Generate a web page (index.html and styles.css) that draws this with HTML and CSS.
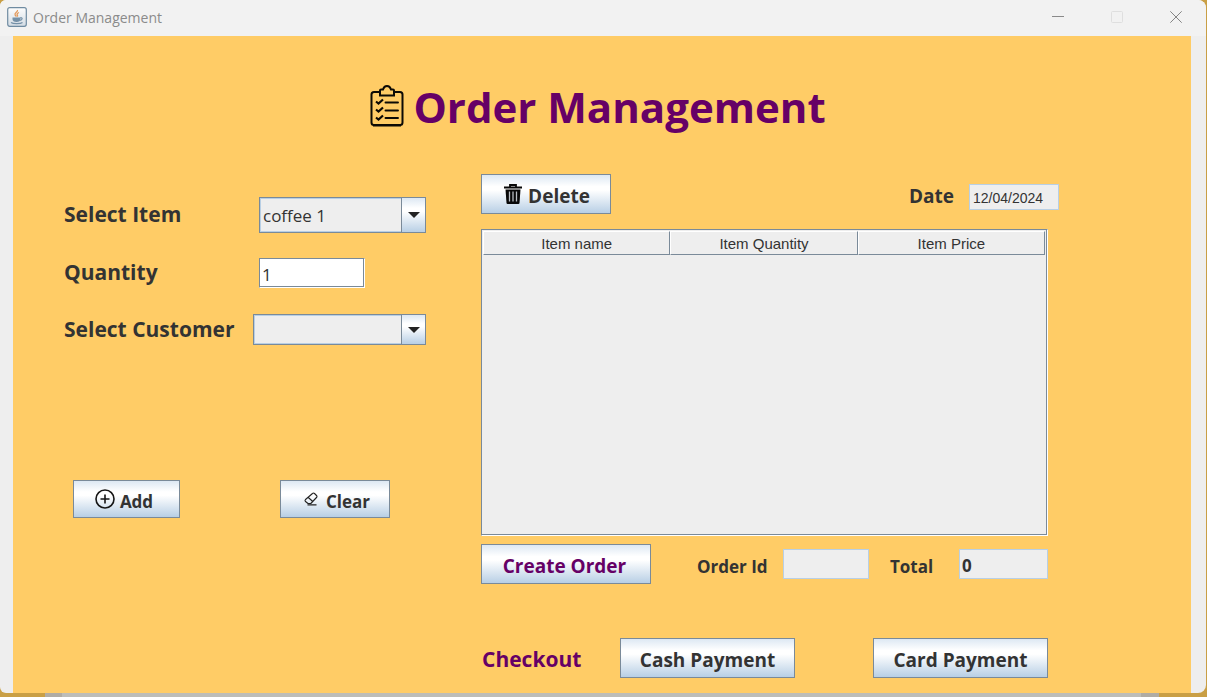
FILE: index.html
```html
<!DOCTYPE html>
<html lang="en">
<head>
<meta charset="utf-8">
<title>Order Management</title>
<link rel="stylesheet" href="styles.css">
</head>
<body>
<div class="window">
  <header class="titlebar">
    <svg class="app-icon" viewBox="0 0 20 20" aria-hidden="true">
      <defs><linearGradient id="tile" x1="0" y1="0" x2="0" y2="1"><stop offset="0" stop-color="#fdfdfd"/><stop offset="1" stop-color="#d3dce4"/></linearGradient></defs>
      <rect x=".7" y=".7" width="18.6" height="18.6" rx="2" fill="url(#tile)" stroke="#6f8ba1" stroke-width="1.2"/>
      <path d="M10.5 3c.6 2-3.400 2.600-2.400 5 .3.8 1 1.200 1.400 1.500M12 5.500c-1.800.9-2.400 1.600-1.600 2.600.4.5.2 1-.3 1.400" fill="none" stroke="#e39a5c" stroke-width="1.300"/>
      <path d="M5.500 10.500h8v1.500c0 1.800-1.500 3-4 3s-4-1.200-4-3z" fill="#7591a8"/>
      <path d="M13.300 10.800c2.600-.6 2.400 2.200-.5 2.600M4 15.500c2 1.500 9.500 1.500 11.500 0" fill="none" stroke="#7591a8" stroke-width="1.200"/>
    </svg>
    <span class="titlebar-text">Order Management</span>
    <div class="window-buttons">
      <button type="button" aria-label="Minimize"><svg viewBox="0 0 12 12"><path d="M0 5.500h12" stroke="#8a8a8a"/></svg></button>
      <button type="button" aria-label="Maximize" disabled><svg viewBox="0 0 12 12"><rect x=".5" y=".5" width="11" height="11" rx="1" stroke="#dfdfdf"/></svg></button>
      <button type="button" aria-label="Close"><svg viewBox="0 0 12 12"><path d="M.3.300l11.400 11.400M11.700.300L.3 11.700" stroke="#858585"/></svg></button>
    </div>
  </header>

  <main class="panel">
    <div class="heading">
      <svg class="heading-icon" viewBox="0 0 34 42" fill="none" stroke="#0c0a05" aria-hidden="true">
        <path d="M9 7H4Q1.500 7 1.500 9.500V37.500Q1.500 40 4 40H30Q32.500 40 32.500 37.500V9.500Q32.500 7 30 7H25" stroke-width="2"/>
        <path d="M3 40.500H31" stroke-width="2"/>
        <path d="M10 10.500V5.500Q10 4.500 11 4.500H13Q14 1 17 1T21 4.500H23Q24 4.500 24 5.500V10.500Z" stroke-width="2"/>
        <path d="M6 16.500l2.500 2 4.500-4M6 24.500l2.500 2 4.500-4M6 32.500l2.500 2 4.500-4" stroke-width="2.200"/>
        <path d="M15.500 17.500H28M15.500 25.500H28M15.500 33H28" stroke-width="1.900" stroke-linecap="round"/>
      </svg>
      <h1>Order Management</h1>
    </div>

    <div class="columns">
      <form class="entry">
        <div class="field field-item">
          <label for="item">Select Item</label>
          <div class="combo">
            <select id="item"><option>coffee 1</option></select>
            <span class="combo-arrow"><svg viewBox="0 0 12 6"><path d="M0 0h12L6 6z" fill="#222"/></svg></span>
          </div>
        </div>
        <div class="field field-quantity">
          <label for="quantity">Quantity</label>
          <input id="quantity" class="text-box" type="text" value="1">
        </div>
        <div class="field field-customer">
          <label for="customer">Select Customer</label>
          <div class="combo">
            <select id="customer"><option></option></select>
            <span class="combo-arrow"><svg viewBox="0 0 12 6"><path d="M0 0h12L6 6z" fill="#222"/></svg></span>
          </div>
        </div>
        <div class="entry-actions">
          <button type="button" class="btn btn-small btn-add">
            <svg class="icon-add" viewBox="0 0 20 20" fill="none" stroke="#151515" stroke-width="1.600" aria-hidden="true"><circle cx="10" cy="10" r="9"/><path d="M10 5.500v9M5.500 10h9"/></svg>
            Add
          </button>
          <button type="button" class="btn btn-small btn-clear">
            <svg class="icon-clear" viewBox="0 0 14 14" fill="none" stroke="#222" stroke-width="1.100" stroke-linejoin="round" aria-hidden="true"><path d="M1.500 7.500L8.500 1.500Q9.500.5 10.500 1.500L12.500 3.500Q13.500 4.500 12.500 5.500L6.800 11.500H4L1.500 9.500Q.6 8.500 1.500 7.500zM4.300 5.500l4.500 4M3.500 12.900H12.500"/></svg>
            Clear
          </button>
        </div>
      </form>

      <section class="order">
        <div class="order-top">
          <button type="button" class="btn btn-delete">
            <svg class="icon-delete" viewBox="0 0 18 20" aria-hidden="true">
              <path d="M0 3.500H18M6 3V1H12V3" fill="none" stroke="#080808" stroke-width="1.800"/>
              <path d="M1.500 5.500H16.500L15.500 19Q15.400 20 14.400 20H3.600Q2.600 20 2.500 19Z" fill="#080808"/>
              <path d="M5.500 7.500V17.500M9 7.500V17.500M12.500 7.500V17.500" stroke="#b9bec4" stroke-width="1.300"/>
            </svg>
            Delete
          </button>
          <div class="date">
            <label for="date">Date</label>
            <input id="date" class="read-box" type="text" value="12/04/2024" readonly>
          </div>
        </div>

        <div class="table-pane">
          <table>
            <thead><tr><th scope="col">Item name</th><th scope="col">Item Quantity</th><th scope="col">Item Price</th></tr></thead>
            <tbody></tbody>
          </table>
        </div>

        <div class="order-summary">
          <button type="button" class="btn btn-create">Create Order</button>
          <label class="order-id-label" for="order-id">Order Id</label>
          <input id="order-id" class="read-box order-id" type="text" readonly>
          <label class="total-label" for="total">Total</label>
          <input id="total" class="read-box total" type="text" value="0" readonly>
        </div>

        <div class="checkout">
          <h2>Checkout</h2>
          <button type="button" class="btn btn-pay">Cash Payment</button>
          <button type="button" class="btn btn-pay btn-card">Card Payment</button>
        </div>
      </section>
    </div>
  </main>
</div>
<div class="desktop-edge"></div>
</body>
</html>
```

FILE: styles.css
```css
* {
  box-sizing: border-box;
}

body {
  margin: 0;
  min-height: 100vh;
  display: flex;
  flex-direction: column;
  background: #c99f45;
  color: #333;
  font-family: "Open Sans", "Noto Sans", sans-serif;
}

button,
input,
select {
  margin: 0;
  font: inherit;
  color: inherit;
}

.window {
  flex: 1;
  display: flex;
  flex-direction: column;
  margin-right: 1px;
  border-radius: 6px 8px 8px 6px;
  background: #eee;
  overflow: hidden;
}

.titlebar {
  display: flex;
  align-items: center;
  height: 36px;
  padding: 0 1px 2px 7px;
  background: #f2f2f2;
}

.app-icon {
  width: 20px;
  height: 20px;
  margin-right: 6px;
}

.titlebar-text {
  font-size: 14px;
  color: #8b8b8b;
}

.window-buttons {
  display: flex;
  margin-left: auto;
}

.window-buttons button {
  display: grid;
  place-items: center;
  width: 59px;
  height: 34px;
  padding: 0;
  border: 0;
  background: none;
}

.window-buttons svg {
  width: 12px;
  height: 12px;
  fill: none;
}

.panel {
  flex: 1;
  margin: 0 15px 0 13px;
  background: #fc6;
}

.heading {
  display: flex;
  justify-content: center;
  align-items: center;
  gap: 9px;
  padding: 40px 8px 38px 0;
}

.heading-icon {
  width: 34px;
  height: 42px;
}

h1 {
  margin: 0;
  padding-top: 2px;
  font-size: 42px;
  line-height: 58px;
  color: #606;
}

.columns {
  display: grid;
  grid-template-columns: 362fr 578fr;
  gap: 55px;
  padding: 0 132px 15px 51px;
}

label {
  font-weight: 700;
}

.entry {
  padding-top: 23px;
}

.field {
  display: flex;
  align-items: center;
}

.field label {
  width: 195px;
  padding-bottom: 2px;
  font-size: 21px;
  line-height: 28px;
}

.field-quantity {
  margin: 25px 0 26px;
}

.field-customer label {
  width: 189px;
}

.combo {
  position: relative;
  flex: 1;
  height: 36px;
}

.field-customer .combo {
  height: 31px;
}

.combo select {
  appearance: none;
  display: block;
  width: 100%;
  height: 100%;
  padding: 0 28px 0 3px;
  border: 1px solid #7a8a99;
  border-radius: 0;
  background: #eee;
  box-shadow: inset 0 0 0 1px #b8cfe5;
  font-size: 17px;
}

.combo-arrow {
  position: absolute;
  top: 0;
  right: 0;
  bottom: 0;
  display: grid;
  place-items: center;
  width: 25px;
  border: 1px solid #7a8a99;
  background: linear-gradient(#dde8f3, #fff 30%, #fff 40%, #b8cfe5);
  pointer-events: none;
}

.combo-arrow svg {
  width: 12px;
  height: 6px;
}

.text-box {
  width: 106px;
  height: 30px;
  padding: 2px 2px 0;
  border: 1px solid #7a8a99;
  border-right-color: #fff;
  border-bottom-color: #fff;
  background: #fff;
  box-shadow: inset -1px -1px 0 #7a8a99;
  font-size: 17px;
}

.btn {
  display: flex;
  justify-content: center;
  align-items: center;
  height: 40px;
  padding: 4px 0 0;
  border: 1px solid #7a8a99;
  background: linear-gradient(#dde8f3, #fff 30%, #fff 40%, #b8cfe5);
  font-size: 19px;
  font-weight: 700;
  white-space: nowrap;
}

.btn svg {
  margin-bottom: 4px;
}

.btn-small {
  height: 38px;
  font-size: 17px;
}

.entry-actions {
  display: flex;
  gap: 100px;
  margin: 135px 0 0 9px;
}

.btn-add {
  width: 107px;
  padding-right: 5px;
  gap: 5px;
}

.btn-clear {
  width: 110px;
  padding-left: 4px;
  gap: 8px;
}

.icon-add {
  width: 20px;
  height: 20px;
}

.icon-clear {
  width: 14px;
  height: 14px;
}

.order-top {
  display: flex;
  justify-content: space-between;
  align-items: center;
  margin-bottom: 15px;
}

.btn-delete {
  width: 130px;
  padding-left: 2px;
  gap: 6px;
}

.icon-delete {
  width: 18px;
  height: 20px;
}

.date {
  display: flex;
  align-items: center;
  gap: 15px;
  padding-top: 5px;
}

.date label {
  padding-bottom: 2px;
  font-size: 19px;
}

.read-box {
  height: 30px;
  padding: 2px 2px 0;
  border: 1px solid #b8cfe5;
  background: #eee;
}

.date .read-box {
  width: 90px;
  height: 26px;
  padding-left: 3px;
  font: 14px "Liberation Sans", sans-serif;
}

.table-pane {
  height: 307px;
  margin-right: 11px;
  padding: 1px 2px 1px 1px;
  border: 1px solid #7a8a99;
  border-right-color: #fff;
  border-bottom-color: #fff;
  background: #eee;
  box-shadow: inset -1px -1px 0 #7a8a99;
}

table {
  width: 100%;
  table-layout: fixed;
  border-collapse: separate;
  border-spacing: 0;
}

th {
  height: 24px;
  padding: 0;
  border: 1px solid #7a8a99;
  border-top-color: #fff;
  border-left-color: #fff;
  font: 15px "Liberation Sans", sans-serif;
}

.order-summary {
  display: flex;
  align-items: center;
  margin: 8px 11px 0 0;
  font-size: 17px;
  font-weight: 700;
}

.btn-create {
  width: 170px;
  padding-right: 3px;
  color: #606;
}

.order-id-label {
  width: 86px;
  margin-left: 46px;
  padding-top: 4px;
}

.order-id {
  width: 86px;
}

.total-label {
  margin: 0 0 0 21px;
  padding-top: 4px;
}

.total {
  width: 89px;
  margin-left: auto;
}

.checkout {
  display: flex;
  align-items: center;
  margin: 54px 11px 0 0;
}

h2 {
  width: 139px;
  margin: 0;
  padding: 2px 0 0 1px;
  font-size: 21px;
  line-height: 30px;
  color: #606;
}

.btn-pay {
  width: 175px;
}

.btn-card {
  margin-left: auto;
}

.desktop-edge {
  height: 4px;
  margin: 0 48px 0 45px;
  border: solid #b0aca4;
  border-width: 0 18px 0 17px;
  background: #bdbdb8;
}
```
